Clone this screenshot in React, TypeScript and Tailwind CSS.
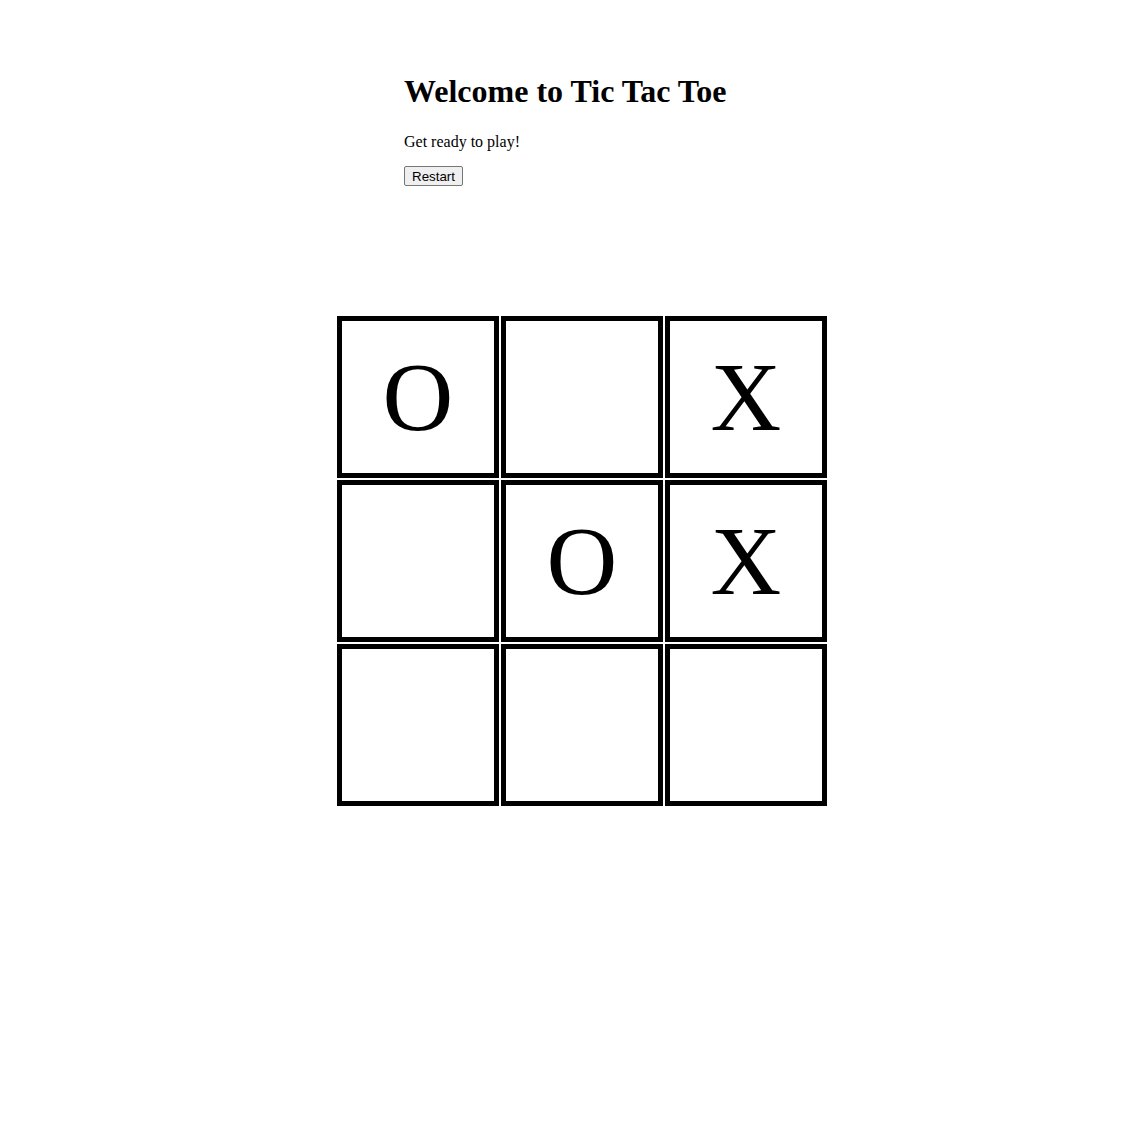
import { useState } from 'react';

const initialBoard = ['O', '', 'X', '', 'O', 'X', '', '', ''];

export default function App() {
  const [board, setBoard] = useState<string[]>(initialBoard);

  return (
    <div className="min-h-screen bg-white text-black font-['Liberation_Serif','Times_New_Roman',serif]">
      <div className="pl-[404px] pt-[46px]">
        <h1 className="mt-[21.44px] mb-[15px] text-[32px] font-bold leading-normal">Welcome to Tic Tac Toe</h1>
        <p className="mt-[15px] mb-[12px] text-base leading-normal">Get ready to play!</p>
        <div className="flex">
          <button
            onClick={() => setBoard(Array(9).fill(''))}
            className="h-[20px] rounded-[2px] border border-[#767676] bg-[#efefef] px-[7px] font-['Liberation_Sans',Arial,sans-serif] text-[13.333px] leading-none text-black"
          >
            Restart
          </button>
        </div>
      </div>
      <div className="mt-[130px] pl-[337px]">
        <div className="grid w-fit grid-cols-[repeat(3,162px)] gap-[2px]">
          {board.map((cell, i) => (
            <div
              key={i}
              className="flex h-[162px] w-[162px] items-center justify-center border-[5px] border-black text-[98px] leading-none"
            >
              {cell}
            </div>
          ))}
        </div>
      </div>
    </div>
  );
}
